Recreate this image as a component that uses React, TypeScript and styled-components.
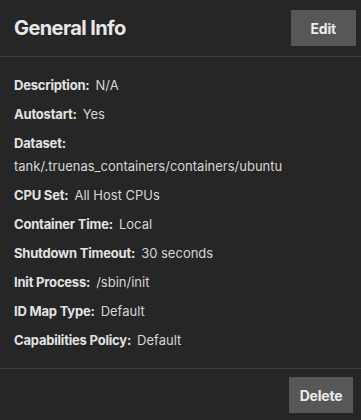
import React from "react";
import styled, { createGlobalStyle } from "styled-components";

const Global = createGlobalStyle`
  html, body { margin: 0; padding: 0; background: #262626; }
  body { font-family: Inter, "Noto Sans", sans-serif; }
`;

const Card = styled.div`
  width: 361px;
  height: 420px;
  background: #262626;
  color: #dcdcdc;
  display: flex;
  flex-direction: column;
  box-sizing: border-box;
`;

const Header = styled.div`
  display: flex;
  align-items: center;
  justify-content: space-between;
  padding: 10px 5px 10px 14px;
  border-bottom: 1px solid #3a3a3a;
`;

const Title = styled.h2`
  margin: 0;
  font-size: 20px;
  font-weight: 700;
  letter-spacing: -0.6px;
  color: #e6e6e6;
`;

const Button = styled.button<{ $wide?: boolean }>`
  height: 36px;
  padding: 0 ${(p) => (p.$wide ? "10px" : "20px")};
  min-width: 64px;
  border: none;
  border-radius: 0;
  background: #575757;
  color: #ececec;
  font-family: Inter, sans-serif;
  font-size: 14px;
  font-weight: 700;
  letter-spacing: -0.2px;
  cursor: pointer;
`;

const Content = styled.div`
  display: flex;
  flex-direction: column;
  gap: 9px;
  padding: 18px 14px 18px;
  border-bottom: 1px solid #3a3a3a;
`;

const Row = styled.div`
  font-size: 13px;
  line-height: 20px;
`;

const Label = styled.span`
  font-weight: 700;
  color: #e2e2e2;
  letter-spacing: -0.2px;
  margin-right: 6px;
`;

const Value = styled.span`
  color: #d6d6d6;
`;

const BlockValue = styled.div`
  margin-top: 3px;
  color: #d6d6d6;
`;

const Footer = styled.div`
  display: flex;
  justify-content: flex-end;
  padding: 8px 8px 7px;
`;

const rows: [string, string][] = [
  ["Description:", "N/A"],
  ["Autostart:", "Yes"],
];
const rows2: [string, string][] = [
  ["CPU Set:", "All Host CPUs"],
  ["Container Time:", "Local"],
  ["Shutdown Timeout:", "30 seconds"],
  ["Init Process:", "/sbin/init"],
  ["ID Map Type:", "Default"],
  ["Capabilities Policy:", "Default"],
];

export default function App() {
  return (
    <Card>
      <Global />
      <Header>
        <Title>General Info</Title>
        <Button>Edit</Button>
      </Header>
      <Content>
        {rows.map(([l, v]) => (
          <Row key={l}>
            <Label>{l}</Label>
            <Value>{v}</Value>
          </Row>
        ))}
        <Row>
          <Label>Dataset:</Label>
          <BlockValue>tank/.truenas_containers/containers/ubuntu</BlockValue>
        </Row>
        {rows2.map(([l, v]) => (
          <Row key={l}>
            <Label>{l}</Label>
            <Value>{v}</Value>
          </Row>
        ))}
      </Content>
      <Footer>
        <Button $wide>Delete</Button>
      </Footer>
    </Card>
  );
}
